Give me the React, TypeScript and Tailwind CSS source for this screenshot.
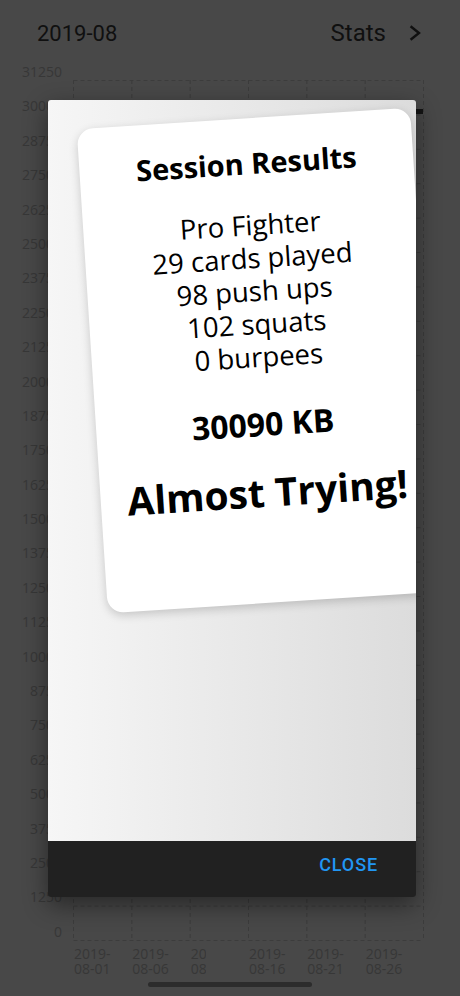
import React from "react";

const yLabels = [
  "31250", "30000", "28750", "27500", "26250", "25000", "23750", "22500", "21250",
  "20000", "18750", "17500", "16250", "15000", "13750", "12500", "11250", "10000",
  "8750", "7500", "6250", "5000", "3750", "2500", "1250", "0",
];

const xLabels = ["08-01", "08-06", "08-11", "08-16", "08-21", "08-26"];

function Grid() {
  const w = 350;
  const h = 860;
  const step = h / 25;
  const colStep = w / 6;
  return (
    <svg width={352} height={862} className="block">
      {Array.from({ length: 26 }).map((_, i) => (
        <line
          key={"h" + i}
          x1={0.5}
          x2={w + 0.5}
          y1={i * step + 0.5}
          y2={i * step + 0.5}
          stroke="#3c3c3c"
          strokeWidth={1}
          strokeDasharray="4 3"
        />
      ))}
      {Array.from({ length: 7 }).map((_, i) => (
        <line
          key={"v" + i}
          x1={i * colStep + 0.5}
          x2={i * colStep + 0.5}
          y1={0}
          y2={h}
          stroke="#3c3c3c"
          strokeWidth={1}
          strokeDasharray="4 3"
        />
      ))}
      <rect x={343} y={29} width={7} height={5} fill="#141414" />
    </svg>
  );
}

export default function App() {
  return (
    <div className="relative w-[460px] h-[996px] overflow-hidden bg-[#484848]">
      {/* Header */}
      <div className="mt-[11px] h-[44px] flex items-center justify-between pl-[37px] pr-[38px] text-[#101010] font-['Roboto',sans-serif]">
        <span className="text-[22px]">2019-08</span>
        <div className="flex items-center gap-[23px]">
          <span className="text-[24px]">Stats</span>
          <svg width="13" height="16" viewBox="0 0 13 16" className="block">
            <polyline
              points="2.5,2 10,8 2.5,14"
              fill="none"
              stroke="#101010"
              strokeWidth="2.4"
              strokeLinecap="square"
            />
          </svg>
        </div>
      </div>

      {/* Chart */}
      <div className="flex font-['Open_Sans',sans-serif] text-[14px] text-[#373737]">
        <div className="w-[62px] flex flex-col items-end">
          {yLabels.map((l) => (
            <div key={l} className="h-[34.4px] leading-[34.4px]">
              {l}
            </div>
          ))}
        </div>
        <div className="ml-[11px] pt-[25px]">
          <Grid />
          <div className="flex mt-[4px] leading-[15px]">
            {xLabels.map((l, i) => (
              <div key={l} className="w-[58.33px] pl-[1px]">
                <div className={i === 2 ? "w-[15px] overflow-hidden whitespace-nowrap" : "whitespace-nowrap"}>
                  <div>2019-</div>
                  <div>{l}</div>
                </div>
              </div>
            ))}
          </div>
        </div>
      </div>

      {/* Dialog */}
      <div className="absolute left-[48px] top-[100px] w-[368px] h-[797px] flex flex-col rounded-[3px] overflow-hidden shadow-[0_8px_24px_rgba(0,0,0,0.45)]">
        <div className="flex-1 overflow-hidden bg-linear-to-r from-[#f6f6f6] to-[#dcdcdc]">
          <div className="ml-[44px] mt-[18px] w-[334px] h-[485px] shrink-0 rotate-[-3.7deg] rounded-[16px] bg-white shadow-[0_3px_10px_rgba(0,0,0,0.18)] flex flex-col items-center text-black font-['Open_Sans',sans-serif] text-center">
            <div className="mt-[28px] text-[29px] leading-[34px] font-bold whitespace-nowrap">Session Results</div>
            <div className="mt-[28px] text-[27.5px] leading-[33px] whitespace-nowrap">
              <div>Pro Fighter</div>
              <div>29 cards played</div>
              <div>98 push ups</div>
              <div>102 squats</div>
              <div>0 burpees</div>
            </div>
            <div className="mt-[32px] text-[32px] leading-[38px] font-bold whitespace-nowrap">30090 KB</div>
            <div className="mt-[26px] text-[39px] leading-[46px] font-bold whitespace-nowrap">Almost Trying!</div>
          </div>
        </div>
        <div className="h-[56px] shrink-0 bg-[#212121] flex items-center justify-end pr-[38px] pb-[10px]">
          <span className="text-[18px] font-medium tracking-[0.9px] text-[#2196f3] font-['Roboto',sans-serif]">CLOSE</span>
        </div>
      </div>

      {/* Home indicator */}
      <div className="absolute left-[148px] bottom-[9px] w-[164px] h-[5px] rounded-full bg-[#2c2c2c]" />
    </div>
  );
}
